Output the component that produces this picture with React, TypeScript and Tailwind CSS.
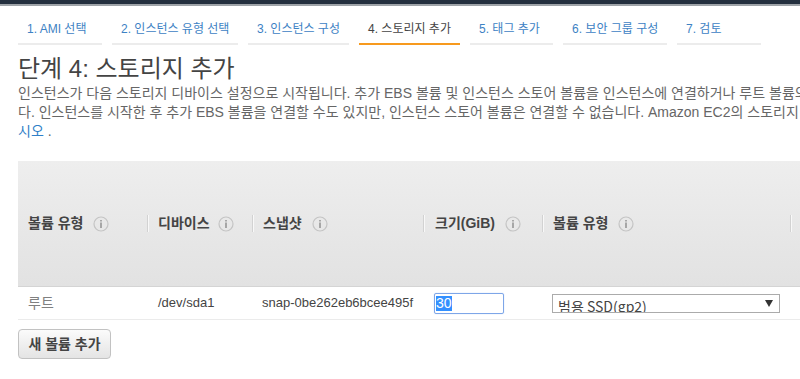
import React from "react";

const FONT = "font-['Liberation_Sans','Noto_Sans_CJK_KR',sans-serif]";

function Info() {
  return (
    <svg width="16" height="16" viewBox="0 0 16 16" className="shrink-0">
      <circle cx="8" cy="8" r="7" fill="none" stroke="#c4c4c4" strokeWidth="1.2" />
      <rect x="7.3" y="4" width="1.4" height="1.5" fill="#8a8a8a" />
      <rect x="7.3" y="6.5" width="1.4" height="5.5" fill="#8a8a8a" />
    </svg>
  );
}

function Sep() {
  return <div className="w-[2px] h-[17px] border-l border-[#d2d2d2] bg-white/70 shrink-0" />;
}

const tabs: { label: string; w: string; active?: boolean }[] = [
  { label: "1. AMI 선택", w: "w-[84px]" },
  { label: "2. 인스턴스 유형 선택", w: "w-[126px]" },
  { label: "3. 인스턴스 구성", w: "w-[101px]" },
  { label: "4. 스토리지 추가", w: "w-[101px]", active: true },
  { label: "5. 태그 추가", w: "w-[83px]" },
  { label: "6. 보안 그룹 구성", w: "w-[104px]" },
  { label: "7. 검토", w: "w-[84px]" },
];

export default function App() {
  return (
    <div className={`w-[800px] h-[379px] overflow-hidden bg-white ${FONT}`}>
      <div className="h-[4px] bg-[#232f3e]" />
      <div className="h-[2px] bg-[#9ea3a8]" />

      <div className="flex gap-[10px] pl-[18px] pt-[16px]">
        {tabs.map((t) => (
          <div
            key={t.label}
            className={`${t.w} shrink-0 pl-[9px] h-[23px] text-[12px] leading-[14px] whitespace-nowrap border-b-2 ${
              t.active ? "border-[#f79a1e] text-[#444]" : "border-[#ececec] text-[#3d82c4]"
            }`}
          >
            {t.label}
          </div>
        ))}
      </div>

      <div className="pl-[18px] pt-[10px]">
        <h1 className="text-[24px] leading-[28px] text-[#444] whitespace-nowrap">
          단계 4: 스토리지 추가
        </h1>
        <div className="text-[14px] leading-[19px] text-[#666] whitespace-nowrap mt-[1px]">
          <div>
            인스턴스가 다음 스토리지 디바이스 설정으로 시작됩니다. 추가 EBS 볼륨 및 인스턴스 스토어 볼륨을 인스턴스에 연결하거나 루트 볼륨의 설정을 편집할 수 있습니
          </div>
          <div>
            다. 인스턴스를 시작한 후 추가 EBS 볼륨을 연결할 수도 있지만, 인스턴스 스토어 볼륨은 연결할 수 없습니다. Amazon EC2의 스토리지 옵션에 대해 자세히 알아보십
          </div>
          <div>
            <span className="text-[#2f7fc8]">시오</span> .
          </div>
        </div>
      </div>

      <div className="ml-[18px] mt-[20px] w-[900px]">
        <div className="h-[126px] flex items-center bg-gradient-to-b from-[#eeeeee] to-[#e2e2e2] border-b border-[#d4d4d4] text-[14px] font-bold text-[#444] whitespace-nowrap">
          <div className="w-[129px] shrink-0 pl-[10px] flex items-center gap-[10px]">
            볼륨 유형 <Info />
          </div>
          <div className="w-[105px] shrink-0 flex items-center">
            <Sep />
            <span className="ml-[9px] mr-[8px]">디바이스</span>
            <Info />
          </div>
          <div className="w-[171px] shrink-0 flex items-center">
            <Sep />
            <span className="ml-[9px] mr-[10px]">스냅샷</span>
            <Info />
          </div>
          <div className="w-[119px] shrink-0 flex items-center">
            <Sep />
            <span className="ml-[10px] mr-[10px]">크기(GiB)</span>
            <Info />
          </div>
          <div className="w-[248px] shrink-0 flex items-center">
            <Sep />
            <span className="ml-[9px] mr-[10px]">볼륨 유형</span>
            <Info />
          </div>
          <Sep />
        </div>

        <div className="h-[33px] flex items-center border-b border-[#ebebeb] text-[13px] text-[#444] whitespace-nowrap">
          <div className="w-[129px] shrink-0 pl-[10px] text-[14px] text-[#808080]">루트</div>
          <div className="w-[105px] shrink-0 pl-[11px]">/dev/sda1</div>
          <div className="w-[171px] shrink-0 pl-[10px]">snap-0be262eb6bcee495f</div>
          <div className="w-[119px] shrink-0 pl-[11px]">
            <div className="w-[70px] h-[21px] border border-[#7ea6e8] rounded-[2px] shadow-[0_0_1px_#9dbff0] flex items-center pl-[1px]">
              <span className="bg-[#3390ff] text-white text-[14px] leading-[15px]">30</span>
            </div>
          </div>
          <div className="w-[248px] shrink-0 pl-[10px]">
            <div className="w-[228px] h-[19px] border border-[#ababab] overflow-hidden flex items-start justify-between pl-[5px] pr-[6px] bg-white">
              <span className="text-[14px] leading-[20px] pt-[1px] text-[#444] font-['Noto_Sans_CJK_KR',sans-serif]">
                범용 SSD(gp2)
              </span>
              <svg width="8" height="7" viewBox="0 0 8 7" className="mt-[5px]">
                <path d="M0 0 H8 L4 7 Z" fill="#333" />
              </svg>
            </div>
          </div>
        </div>

        <button className="mt-[9px] w-[93px] h-[30px] rounded-[4px] border border-[#c2c2c2] bg-gradient-to-b from-[#fbfbfb] to-[#e4e4e4] text-[14px] font-bold text-[#444] whitespace-nowrap">
          새 볼륨 추가
        </button>
      </div>
    </div>
  );
}
